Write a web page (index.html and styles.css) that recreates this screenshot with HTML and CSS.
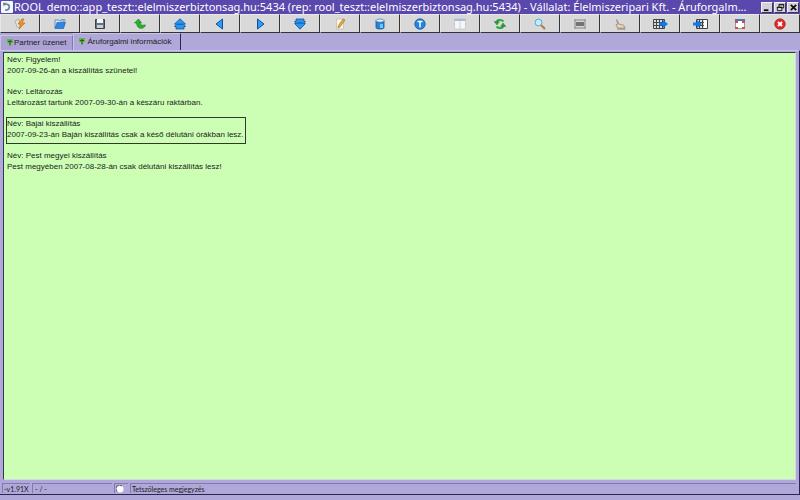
FILE: index.html
```html
<!DOCTYPE html>
<html lang="hu">
<head>
    <meta charset="UTF-8">
    <meta name="viewport" content="width=device-width, initial-scale=1.0">
    <title>ROOL demo</title>
    <link rel="stylesheet" href="styles.css">
</head>
<body>
    <header class="titlebar">
        <svg class="app-icon" viewBox="0 0 13 13"><rect width="13" height="13" rx="1" fill="#f4f6fa"/><path d="M4 3.500h3a3.200 3.200 0 1 1-2.500 6" fill="none" stroke="#5f8798" stroke-width="1.800"/><path d="M2 2l4 0-3 4z" fill="#5f8798"/></svg>
        <h1 class="title">ROOL demo::app_teszt::elelmiszerbiztonsag.hu:5434 (rep: rool_teszt::elelmiszerbiztonsag.hu:5434) - Vállalat: Élelmiszeripari Kft. - Áruforgalm...</h1>
        <div class="window-buttons">
            <button aria-label="Kis méret"><svg viewBox="0 0 10 10"><path d="M1 8h5" stroke="#111" stroke-width="2"/></svg></button>
            <button aria-label="Előző méret"><svg viewBox="0 0 10 10"><path d="M3.500 4V1.500h5v4H6.500M3 2h6M1.500 4.500h5v4h-5zM1 5h6" fill="none" stroke="#111"/></svg></button>
            <button aria-label="Bezárás"><svg viewBox="0 0 10 10"><path d="M2 2l6 6M8 2l-6 6" stroke="#111" stroke-width="2"/></svg></button>
        </div>
    </header>

    <nav class="toolbar">
        <button aria-label="Végrehajtás"><svg viewBox="0 0 12 12"><path d="M1 3l4-2 1 9-3-1z" fill="#e9e2d8" stroke="#9a9089" stroke-width=".6"/><path d="M8 1L4 6h3l-2 5 6-6H8l2-4z" fill="#f79a1c" stroke="#b95f10" stroke-width=".6"/></svg></button>
        <button aria-label="Megnyitás"><svg viewBox="0 0 12 12"><path d="M1 10V2h4l1 1h4v2" fill="#d8eafa" stroke="#4a7fb5" stroke-width=".8"/><path d="M1 10.500l2-6h8.500l-2 6z" fill="#2f86de" stroke="#1b5ba8" stroke-width=".6"/><path d="M7 1.500h4v2" stroke="#5aa0dd" fill="none"/></svg></button>
        <button aria-label="Mentés"><svg viewBox="0 0 12 12"><path d="M1.500 1.500h9v9h-9z" fill="#67717f" stroke="#39424e"/><path d="M3 1h6v4H3z" fill="#f2f5f8"/><path d="M3 7h6v3H3z" fill="#c6ced8"/></svg></button>
        <button aria-label="Visszavonás"><svg viewBox="0 0 12 12"><path d="M.5 5L4.500 1l3 4H6c0 2 2 2.500 5.500 2C10.500 11.500 3 12 2.500 5z" fill="#25b52b" stroke="#13751a" stroke-width=".6"/></svg></button>
        <button aria-label="Első"><svg viewBox="0 0 12 12"><path d="M6 .8L11.500 6H9.500l2 2.500H10V11H2V8.500H.5L2.500 6H.5z" fill="#2b96f0" stroke="#1251a3" stroke-width=".8"/><path d="M3 6.200h6" stroke="#1251a3"/></svg></button>
        <button aria-label="Előző"><svg viewBox="0 0 12 12"><path d="M8.500 1v10L2 6z" fill="#2f9cf2" stroke="#124fa8"/></svg></button>
        <button aria-label="Következő"><svg viewBox="0 0 12 12"><path d="M3.500 1v10L10 6z" fill="#2f9cf2" stroke="#124fa8"/></svg></button>
        <button aria-label="Utolsó"><svg viewBox="0 0 12 12"><path d="M2 1h8v2.500h1.500L9.500 5.500h2L6 11.200.5 5.500h2L.5 3.500H2z" fill="#2b96f0" stroke="#1251a3" stroke-width=".8"/><path d="M3 5h6" stroke="#1251a3"/></svg></button>
        <button aria-label="Szerkesztés"><svg viewBox="0 0 12 12"><path d="M2.500 1h7v10h-7z" fill="#faf7e9" stroke="#bcb6a2" stroke-width=".7"/><path d="M9 1l2 1-5 7-2 1 .3-2.400z" fill="#efa53a" stroke="#8b5a20" stroke-width=".5"/></svg></button>
        <button aria-label="Adatbázis"><svg viewBox="0 0 12 12"><path d="M2 2.500v7c0 2 8 2 8 0v-7z" fill="#2487da" stroke="#145296" stroke-width=".8"/><ellipse cx="6" cy="2.600" rx="4" ry="1.600" fill="#e5f3fc" stroke="#3a739f" stroke-width=".7"/><path d="M6 6h3v4H6z" fill="#7cc4f8"/></svg></button>
        <button aria-label="Információ"><svg viewBox="0 0 12 12"><circle cx="6" cy="6" r="5.200" fill="#2385df" stroke="#1654a4" stroke-width=".8"/><path d="M3.500 3.500h5M6 3.500V9.500" stroke="#fff" stroke-width="1.500"/></svg></button>
        <button aria-label="Űrlap"><svg viewBox="0 0 12 12"><path d="M.5 1h11v10H.5z" fill="#f5f6f8" stroke="#b9bec6" stroke-width=".7"/><path d="M.5 1h11v2H.5z" fill="#a8bdd4"/><path d="M6 3v8" stroke="#ccd0d6"/></svg></button>
        <button aria-label="Frissítés"><svg viewBox="0 0 12 12"><path d="M9.500 3.500C7 1 3 1.500 2.500 4.500M2.500 8.500C5 11 9 10.500 9.500 7.500" fill="none" stroke="#29a534" stroke-width="1.800"/><path d="M0 3.500h5.500L3 7zM12 8.500H6.500L9 5z" fill="#29a534" stroke="#17752a" stroke-width=".4"/></svg></button>
        <button aria-label="Keresés"><svg viewBox="0 0 12 12"><path d="M7 7l4 4" stroke="#b87a38" stroke-width="2"/><circle cx="4.500" cy="4.500" r="3.400" fill="#c5ecfb" stroke="#5aa7ce"/></svg></button>
        <button aria-label="Nyomtatás"><svg viewBox="0 0 12 12"><path d="M1 1v10M11 1v10M1 2h10M1 10h10" stroke="#858585"/><path d="M2 4h8v4H2z" fill="#737373"/></svg></button>
        <button aria-label="Kijelölés"><svg viewBox="0 0 12 12"><path d="M2.500 1.500l3 5 4 .5 1.500 3H3.500L2 6.500l2-.3z" fill="#ead5bd" stroke="#9b8571" stroke-width=".8"/><path d="M3 11h8.500" stroke="#898079"/></svg></button>
        <button aria-label="Export"><svg class="wide" viewBox="0 0 15 12"><path d="M.5 1.500h11v9H.5zM.5 4.500h11M.5 7.500h11M3.500 1v10M6.500 1v10M9.500 1v10" fill="#ddd" stroke="#444"/><path d="M6 4.500h4V2l5 4-5 4V7.500H6z" fill="#1477eb"/></svg></button>
        <button aria-label="Import"><svg class="wide" viewBox="0 0 15 12"><path d="M3.500 1.500h11v9h-11zM3.500 4.500h11M3.500 7.500h11M6.500 1v10M9.500 1v10" fill="#ddd" stroke="#444"/><path d="M11 2h3v8h-3z" fill="#fff"/><path d="M0 4.500h4V2l5 4-5 4V7.500H0z" fill="#1477eb"/></svg></button>
        <button aria-label="Teljes méret"><svg viewBox="0 0 12 12"><path d="M1.500 1.500h9v9h-9z" fill="#fff" stroke="#8999bb"/><path d="M1 1h10v2H1z" fill="#4d73c2"/><path d="M1 3h3v2H1zM8 3h3v2H8zM1 9h3v2H1zM8 9h3v2H8z" fill="#e1493c"/></svg></button>
        <button aria-label="Kilépés"><svg viewBox="0 0 12 12"><circle cx="6" cy="6" r="5.300" fill="#dc2929" stroke="#a51a1a" stroke-width=".6"/><path d="M4 4l4 4M8 4L4 8" stroke="#fff" stroke-width="1.800"/></svg></button>
    </nav>

    <div class="tabs" role="tablist">
        <button class="tab" role="tab" aria-selected="false"><svg viewBox="0 0 6 8"><path d="M0 1h6v4H4v3H2V5H0z" fill="#62b348"/><path d="M1 3.500h4M3 2v5" stroke="#286020"/></svg>Partner üzenet</button>
        <button class="tab active" role="tab" aria-selected="true"><svg viewBox="0 0 6 8"><path d="M0 1h6v4H4v3H2V5H0z" fill="#62b348"/><path d="M1 3.500h4M3 2v5" stroke="#286020"/></svg>Áruforgalmi információk</button>
    </div>

    <main class="panel">
        <div class="messages">
            <p class="message">Név: Figyelem!<br>2007-09-26-án a kiszállítás szünetel!</p>
            <p class="message">Név: Leltározás<br>Leltározást tartunk 2007-09-30-án a készáru raktárban.</p>
            <p class="message selected">Név: Bajai kiszállítás<br>2007-09-23-án Baján kiszállítás csak a késő délutáni órákban lesz.</p>
            <p class="message">Név: Pest megyei kiszállítás<br>Pest megyében 2007-08-28-án csak délutáni kiszállítás lesz!</p>
        </div>
    </main>

    <footer class="statusbar">
        <span class="cell version">-v1.91X</span>
        <span class="cell position">- / -</span>
        <span class="cell state"><svg viewBox="0 0 8 8"><circle cx="4" cy="4" r="3.500" fill="#fff"/><path d="M1 6.500A3.500 3.500 0 0 1 6 1" fill="none" stroke="#555"/></svg></span>
        <span class="cell note">Tetszőleges megjegyzés</span>
    </footer>
</body>
</html>
```
FILE: styles.css
```css
* {
    box-sizing: border-box;
}

body {
    display: flex;
    flex-direction: column;
    height: 100vh;
    margin: 0;
    padding-bottom: 5px;
    background: #b0a8d8;
    color: #222;
    font-family: "Liberation Sans", Arial, sans-serif;
    font-size: 8px;
    overflow: hidden;
}

button {
    margin: 0;
    padding: 0;
    border: 0;
    font: inherit;
    color: inherit;
}

svg {
    display: block;
    flex: none;
}

.titlebar {
    display: flex;
    align-items: center;
    height: 14px;
    padding: 0 1px;
    background: #5b48ac;
}

.app-icon {
    width: 12px;
    height: 12px;
}

.title {
    flex: 1;
    min-width: 0;
    margin: 0 0 0 1px;
    color: #fff;
    font-family: "Noto Sans", Verdana, sans-serif;
    font-size: 11px;
    font-weight: normal;
    line-height: 14px;
    white-space: nowrap;
}

.window-buttons {
    display: flex;
    gap: 1px;
}

.window-buttons button {
    display: flex;
    align-items: center;
    justify-content: center;
    width: 12px;
    height: 11px;
    background: #d4d2d8;
    border: 1px solid;
    border-color: #f4f4f4 #3c3658 #3c3658 #f4f4f4;
}

.window-buttons svg {
    width: 9px;
    height: 9px;
}

.toolbar {
    display: flex;
    height: 19px;
    background: #d9d9d9;
}

.toolbar button {
    display: flex;
    flex: 1;
    align-items: center;
    justify-content: center;
    background: #d9d9d9;
    border: 1px solid;
    border-color: #e8e8e8 #333 #333 #e8e8e8;
}

.toolbar svg {
    width: 12px;
    height: 12px;
}

.toolbar .wide {
    width: 15px;
}

.tabs {
    display: flex;
    align-items: flex-end;
    height: 17px;
}

.tab {
    display: flex;
    align-items: center;
    gap: 1px;
    height: 15px;
    padding: 0 6px 2px;
    background: #aca3d4;
    border-top: 1px solid #c9c3e8;
    border-left: 1px solid #c9c3e8;
    border-right: 1px solid #8278b4;
}

.tab.active {
    gap: 2px;
    height: 17px;
    padding: 0 8px 2px 5px;
    background: #b0a8d8;
    border-right: 1px solid #2c2550;
}

.tab svg {
    width: 6px;
    height: 8px;
}

.panel {
    display: flex;
    flex: 1;
    padding: 1px 3px 3px;
    border-top: 1px solid #cac4ee;
    border-right: 1px solid #2c2550;
}

.messages {
    flex: 1;
    padding: 1px 3px;
    background: #ccffb3;
    border: 1px solid;
    border-color: #303850 #d8d4ee #d8d4ee #303850;
}

.message {
    width: fit-content;
    margin: 0 0 10px;
    line-height: 11px;
}

.message.selected {
    margin: 0 0 7px;
    padding: 0 1px 3px 0;
    outline: 1px solid #303830;
}

.statusbar {
    display: flex;
    gap: 2px;
    height: 12px;
    padding: 0 3px 1px 2px;
    border-right: 1px solid #2c2550;
    border-bottom: 1px solid #2c2550;
}

.cell {
    display: flex;
    align-items: center;
    padding: 0 1px;
    border-top: 1px solid #8278b4;
    border-left: 1px solid #8278b4;
    font-family: Lato, Tahoma, sans-serif;
    font-size: 7px;
    white-space: nowrap;
}

.version {
    width: 28px;
}

.position {
    width: 80px;
    padding-left: 2px;
}

.state {
    width: 14px;
}

.state svg {
    width: 8px;
    height: 8px;
}

.note {
    flex: 1;
}
```
